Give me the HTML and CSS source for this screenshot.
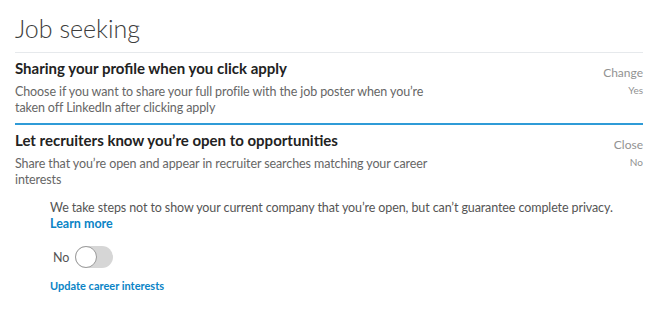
FILE: index.html
```html
<!DOCTYPE html>
<html>
<head>
<meta charset="utf-8">
<link rel="stylesheet" href="styles.css">
</head>
<body>
<div class="page">
  <h1 class="title">Job seeking</h1>
  <section class="setting">
    <div class="setting-text">
      <h2 class="setting-name">Sharing your profile when you click apply</h2>
      <p class="setting-desc">Choose if you want to share your full profile with the job poster when you’re taken off LinkedIn after clicking apply</p>
    </div>
    <div class="setting-side">
      <span class="action">Change</span>
      <span class="value">Yes</span>
    </div>
  </section>
  <section class="setting open">
    <div class="setting-text">
      <h2 class="setting-name">Let recruiters know you’re open to opportunities</h2>
      <p class="setting-desc">Share that you’re open and appear in recruiter searches matching your career interests</p>
    </div>
    <div class="setting-side">
      <span class="action">Close</span>
      <span class="value">No</span>
    </div>
  </section>
  <div class="panel">
    <p class="panel-note">We take steps not to show your current company that you’re open, but can’t guarantee complete privacy.
      <a class="link learn">Learn more</a></p>
    <div class="toggle-row">
      <span class="toggle-label">No</span>
      <span class="toggle"><span class="knob"></span></span>
    </div>
    <a class="link update">Update career interests</a>
  </div>
</div>
</body>
</html>
```
FILE: styles.css
```css
* { box-sizing: border-box; }
body {
  margin: 0;
  background: #fff;
  font-family: Lato, "Open Sans", sans-serif;
  color: #1a1a1a;
}
.page {
  padding: 0 27px 0 15px;
}
.title {
  margin: 0;
  padding-top: 14px;
  padding-bottom: 9px;
  font-size: 25px;
  line-height: 29px;
  font-weight: 300;
  color: #3d3d3d;
  border-bottom: 1px solid #e6e9ec;
}
.setting {
  display: flex;
  justify-content: space-between;
  padding-top: 5px;
  padding-bottom: 8px;
}
.setting + .setting { border-top: 2px solid #2f9bd7; padding-top: 5px; padding-bottom: 0; }
.setting-name {
  margin: 0;
  font-size: 15px;
  line-height: 20px;
  font-weight: 700;
  color: #222;
}
.setting-desc {
  margin: 6px 0 0;
  max-width: 425px;
  font-size: 12.5px;
  letter-spacing: -0.1px;
  line-height: 15.5px;
  color: #666;
}
.setting-side {
  display: flex;
  flex-direction: column;
  align-items: flex-end;
  padding-top: 7px;
}
.action {
  font-size: 12px;
  line-height: 16px;
  color: #929292;
}
.value {
  margin-top: 2px;
  font-size: 10px;
  line-height: 14px;
  color: #929292;
}
.panel {
  padding: 13px 0 0 35px;
}
.panel-note {
  margin: 0;
  font-size: 12.5px;
  letter-spacing: -0.1px;
  line-height: 16px;
  color: #555;
}
.link {
  display: block;
  color: #0a84c6;
  font-weight: 700;
  text-decoration: none;
}
.learn { font-size: 12.5px; line-height: 16px; letter-spacing: 0; }
.toggle-row {
  display: flex;
  align-items: center;
  gap: 6px;
  margin-top: 14px;
  padding-left: 3px;
}
.toggle-label {
  font-size: 12.5px;
  color: #555;
}
.toggle {
  position: relative;
  display: inline-block;
  width: 38px;
  height: 22px;
  border-radius: 11px;
  background: #d6d6d6;
}
.knob {
  position: absolute;
  left: 0;
  top: 0;
  width: 22px;
  height: 22px;
  border-radius: 50%;
  background: #fff;
  border: 1px solid #9a9a9a;
}
.update {
  margin-top: 11px;
  font-size: 11px;
  line-height: 14px;
}
```
